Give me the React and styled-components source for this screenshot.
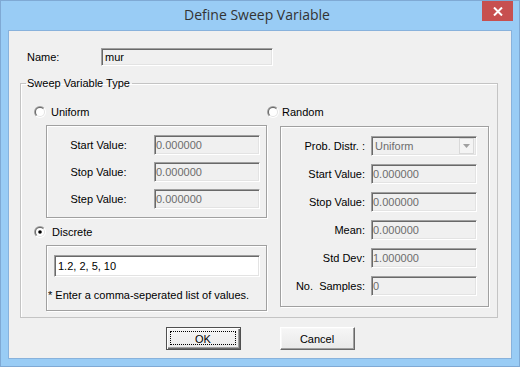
import React from 'react';
import styled, { createGlobalStyle } from 'styled-components';

const GlobalStyle = createGlobalStyle`
  html, body {
    margin: 0;
    padding: 0;
    background: #ffffff;
  }
  * {
    box-sizing: border-box;
  }
`;

const Window = styled.div`
  width: 520px;
  height: 367px;
  background-color: #99ccf5;
  border: 1px solid #7fa9d4;
  display: flex;
  flex-direction: column;
  font-family: 'Liberation Sans', Arial, sans-serif;
  font-size: 11px;
  color: #000;
`;

const TitleBar = styled.div`
  height: 29px;
  display: grid;
  grid-template-columns: 1fr auto 1fr;
  align-items: start;
  padding-right: 6px;
`;

const Title = styled.div`
  grid-column: 2;
  font-family: 'Open Sans', 'Noto Sans', sans-serif;
  font-size: 14px;
  line-height: 28px;
  color: #333333;
`;

const CloseButton = styled.div`
  grid-column: 3;
  justify-self: end;
  width: 31px;
  height: 20px;
  background-color: #c75050;
  display: flex;
  align-items: center;
  justify-content: center;
`;

const Client = styled.div`
  margin: 0 7px;
  height: 329px;
  background-color: #f0f0f0;
  border: 1px solid #88b2dc;
  display: flex;
  flex-direction: column;
`;

const NameRow = styled.div`
  display: flex;
  align-items: center;
  padding: 17px 0 0 18px;
`;

const NameLabel = styled.span`
  width: 74px;
`;

const Field = styled.input`
  width: ${(p) => p.$w || 106}px;
  height: ${(p) => p.$h || 20}px;
  margin: 0 0 0 ${(p) => p.$indent || 0}px;
  padding: 0 0 0 ${(p) => p.$pad || 1}px;
  font-family: 'Liberation Sans', Arial, sans-serif;
  font-size: 11px;
  color: ${(p) => (p.$dim ? '#6d6d6d' : '#000')};
  background-color: ${(p) => (p.$white ? '#ffffff' : '#f0f0f0')};
  border: 1px solid;
  border-color: #a0a0a0 #ffffff #ffffff #a0a0a0;
  box-shadow: inset 1px 1px 0 #696969, inset -1px -1px 0 #e3e3e3;
  outline: none;
`;

const Group = styled.fieldset`
  margin: 10px 0 0 11px;
  width: 478px;
  padding: 0 0 6px 0;
  border: 1px solid #c4c4c4;
  box-shadow: inset 1px 1px 0 #ffffff;
`;

const Legend = styled.legend`
  margin-left: 5px;
  padding: 0 2px 0 1px;
  line-height: 14px;
`;

const Columns = styled.div`
  display: flex;
  padding-top: 15px;
`;

const Column = styled.div`
  display: flex;
  flex-direction: column;
  padding-left: ${(p) => p.$left}px;
`;

const RadioRow = styled.div`
  height: 14px;
  display: flex;
  align-items: center;
  gap: ${(p) => p.$gap || 5}px;
  margin-top: ${(p) => p.$before || 0}px;
  margin-bottom: ${(p) => p.$after}px;
`;

const Panel = styled.div`
  margin-left: ${(p) => p.$indent}px;
  width: ${(p) => p.$w}px;
  height: ${(p) => p.$h}px;
  border: 1px solid #a0a0a0;
  box-shadow: 1px 1px 0 #ffffff, inset 1px 1px 0 #ffffff;
  display: grid;
  grid-template-columns: ${(p) => p.$cols || '1fr'};
  align-content: start;
  align-items: center;
  row-gap: ${(p) => p.$rowGap || 0}px;
  column-gap: ${(p) => p.$colGap || 0}px;
  padding: ${(p) => p.$pad};
`;

const FieldLabel = styled.span`
  text-align: ${(p) => p.$align || 'center'};
  white-space: pre;
`;

const Note = styled.div`
  margin-top: 12px;
  line-height: 13px;
`;

const Select = styled.div`
  width: 106px;
  height: 20px;
  display: flex;
  align-items: center;
  justify-content: space-between;
  padding: 0 2px 0 3px;
  color: #6d6d6d;
  background-color: #f0f0f0;
  border: 1px solid;
  border-color: #a0a0a0 #ffffff #ffffff #a0a0a0;
  box-shadow: inset 1px 1px 0 #696969, inset -1px -1px 0 #e3e3e3;
`;

const SelectArrow = styled.div`
  width: 15px;
  height: 16px;
  background-color: #f4f4f4;
  border: 1px solid #d9d9d9;
  display: flex;
  align-items: center;
  justify-content: center;
`;

const ButtonRow = styled.div`
  display: flex;
  justify-content: center;
  gap: 39px;
  margin-top: 9px;
`;

const Button = styled.div`
  width: 75px;
  height: 23px;
  display: flex;
  align-items: center;
  justify-content: center;
  position: relative;
  background: linear-gradient(#f6f6f6, #e9e9e9);
  border: 1px solid;
  border-color: ${(p) => (p.$default ? '#505050' : '#ffffff #696969 #696969 #ffffff')};
  box-shadow: ${(p) =>
    p.$default
      ? 'inset 1px 1px 0 #ffffff, inset -1px -1px 0 #696969, inset -2px -2px 0 #a0a0a0'
      : 'inset -1px -1px 0 #a0a0a0, inset 1px 1px 0 #f8f8f8'};
`;

const FocusRing = styled.span`
  position: absolute;
  inset: 3px 4px 4px 3px;
  border: 1px dotted #000;
`;

const RadioIcon = ({ checked }) => (
  <svg width='12' height='12' viewBox='0 0 12 12'>
    <defs>
      <linearGradient id='rOuter' x1='0' y1='0' x2='1' y2='1'>
        <stop offset='0.48' stopColor='#a0a0a0' />
        <stop offset='0.52' stopColor='#ffffff' />
      </linearGradient>
      <linearGradient id='rInner' x1='0' y1='0' x2='1' y2='1'>
        <stop offset='0.48' stopColor='#696969' />
        <stop offset='0.52' stopColor='#e3e3e3' />
      </linearGradient>
    </defs>
    <circle cx='6' cy='6' r='6' fill='url(#rOuter)' />
    <circle cx='6' cy='6' r='5' fill='url(#rInner)' />
    <circle cx='6' cy='6' r='4' fill='#ffffff' />
    {checked && <circle cx='6' cy='6' r='1.8' fill='#000000' />}
  </svg>
);

const Radio = ({ label, checked, gap, before, after }) => (
  <RadioRow $gap={gap} $before={before} $after={after}>
    <RadioIcon checked={checked} />
    <span>{label}</span>
  </RadioRow>
);

const uniformRows = [
  ['Start Value:', '0.000000'],
  ['Stop Value:', '0.000000'],
  ['Step Value:', '0.000000'],
];

const randomRows = [
  ['Start Value:', '0.000000'],
  ['Stop Value:', '0.000000'],
  ['Mean:', '0.000000'],
  ['Std Dev:', '1.000000'],
  ['No.  Samples:', '0'],
];

const App = () => {
  return (
    <>
      <GlobalStyle />
      <Window>
        <TitleBar>
          <Title>Define Sweep Variable</Title>
          <CloseButton>
            <svg width='10' height='9' viewBox='0 0 10 9'>
              <path d='M1 0.5 L9 8.5 M9 0.5 L1 8.5' stroke='#ffffff' strokeWidth='2' />
            </svg>
          </CloseButton>
        </TitleBar>
        <Client>
          <NameRow>
            <NameLabel>Name:</NameLabel>
            <Field $w={172} $h={18} $pad={3} value='mur' readOnly />
          </NameRow>
          <Group>
            <Legend>Sweep Variable Type</Legend>
            <Columns>
              <Column $left={13}>
                <Radio label='Uniform' after={6} />
                <Panel $indent={12} $w={221} $h={93} $cols='103px 106px' $colGap={4} $rowGap={7} $pad='9px 0 0 0'>
                  {uniformRows.map(([label, value]) => (
                    <React.Fragment key={label}>
                      <FieldLabel>{label}</FieldLabel>
                      <Field $dim value={value} readOnly disabled />
                    </React.Fragment>
                  ))}
                </Panel>
                <Radio label='Discrete' checked gap={6} before={7} after={6} />
                <Panel $indent={12} $w={221} $h={66} $pad='9px 0 0 1px'>
                  <Field $white $w={206} $h={22} $pad={3} $indent={6} value='1.2, 2, 5, 10' readOnly />
                  <Note>* Enter a comma-seperated list of values.</Note>
                </Panel>
              </Column>
              <Column $left={0}>
                <Radio label='Random' gap={3} after={7} />
                <Panel $indent={13} $w={209} $h={181} $cols='84px 106px' $colGap={6} $rowGap={8} $pad='9px 0 0 0'>
                  <FieldLabel $align='right'>Prob. Distr. :</FieldLabel>
                  <Select>
                    <span>Uniform</span>
                    <SelectArrow>
                      <svg width='7' height='4' viewBox='0 0 7 4'>
                        <path d='M0 0 L7 0 L3.5 4 Z' fill='#a0a0a0' />
                      </svg>
                    </SelectArrow>
                  </Select>
                  {randomRows.map(([label, value]) => (
                    <React.Fragment key={label}>
                      <FieldLabel $align='right'>{label}</FieldLabel>
                      <Field $dim value={value} readOnly disabled />
                    </React.Fragment>
                  ))}
                </Panel>
              </Column>
            </Columns>
          </Group>
          <ButtonRow>
            <Button $default>
              <FocusRing />
              OK
            </Button>
            <Button>Cancel</Button>
          </ButtonRow>
        </Client>
      </Window>
    </>
  );
};

export default App;
